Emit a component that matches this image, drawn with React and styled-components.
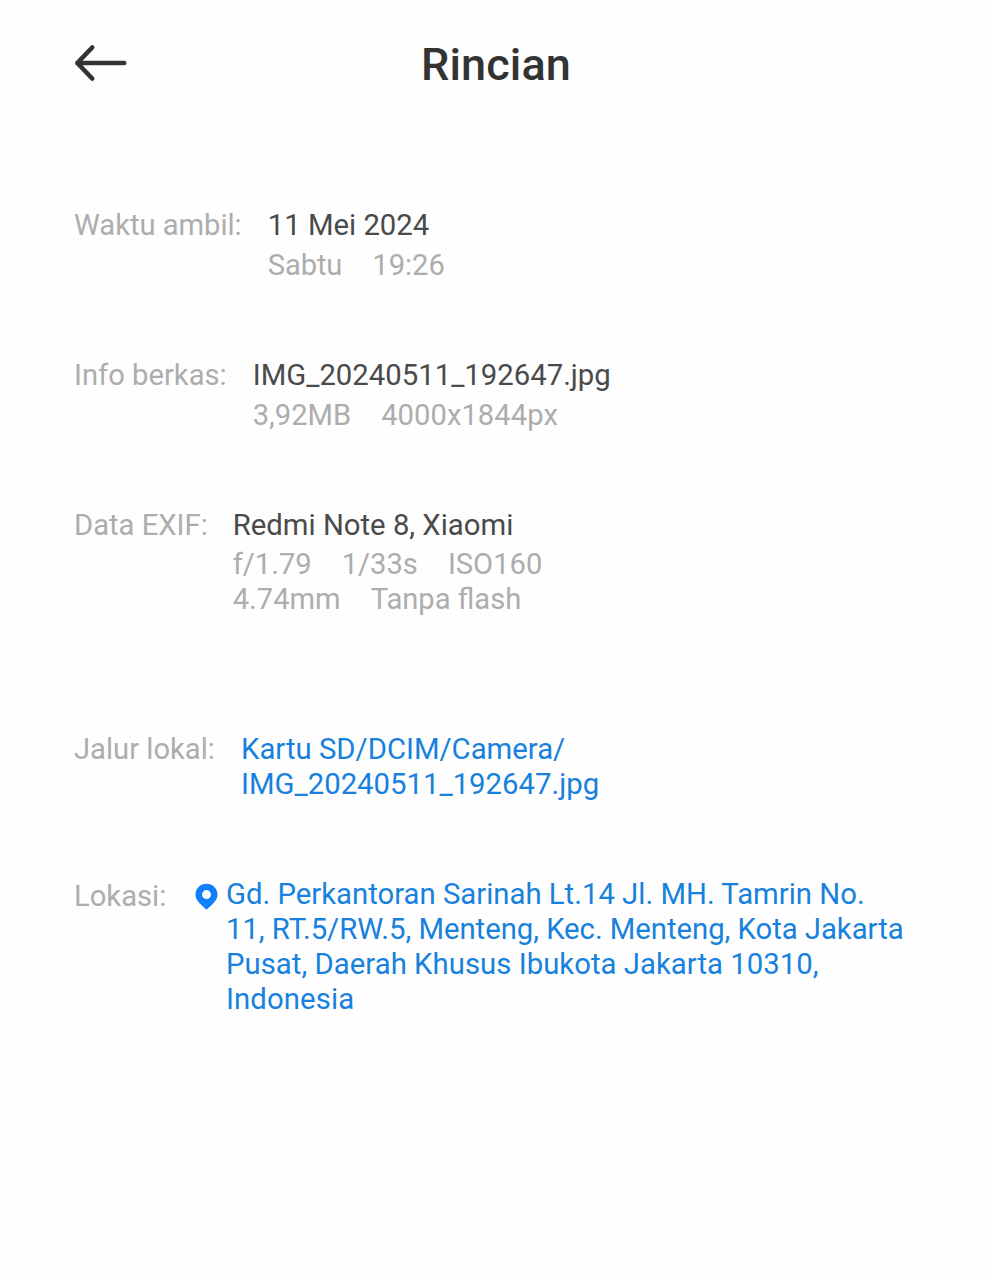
import React from "react";
import styled, { createGlobalStyle } from "styled-components";

const Global = createGlobalStyle`
  * { box-sizing: border-box; }
  body { margin: 0; background: #fefefe; font-family: Roboto, sans-serif; }
`;
const Page = styled.main`
  min-height: 1280px;
  padding: 0 74px;
  background: #fefefe;
`;
const Header = styled.header`
  display: grid;
  grid-template-columns: 54px 1fr 54px;
  align-items: center;
  height: 130px;
`;
const Back = styled.button`
  display: block;
  width: 54px;
  height: 40px;
  padding: 0;
  border: 0;
  margin-bottom: 4px;
  background: none;
  svg { display: block; }
`;
const Title = styled.h1`
  margin: 0;
  text-align: center;
  font-size: 45px;
  line-height: 60px;
  font-weight: 500;
  color: #333;
  letter-spacing: ${(p) => p.$track}px;
`;
const Row = styled.section`
  display: flex;
  align-items: flex-start;
  margin-top: ${(p) => p.$top}px;
`;
const Label = styled.div`
  width: ${(p) => p.$width}px;
  flex: none;
  padding-top: ${(p) => p.$drop || 0}px;
  color: #adadad;
  font-size: 29.2px;
  line-height: 35px;
  white-space: nowrap;
`;
const Value = styled.div`
  color: #4a4a4a;
  font-size: 29.3px;
  line-height: 35px;
  white-space: nowrap;
`;
const Meta = styled.div`
  display: flex;
  gap: 30px;
  margin-top: ${(p) => p.$top || 0}px;
  color: #adadad;
  font-size: 29.15px;
  line-height: 35px;
  white-space: nowrap;
`;
const Link = styled(Value)`
  color: #1781dd;
`;
const Text = styled.span`
  display: block;
  width: max-content;
  letter-spacing: ${(p) => (p.$track ? `${p.$track}px` : "normal")};
`;
const Pin = styled.svg`
  flex: none;
  width: 31px;
  height: 35px;
`;

export default function App() {
  return (
    <Page>
      <Global />
      <Header>
        <Back aria-label="Kembali">
          <svg width="54" height="40" viewBox="0 0 54 40" fill="none" stroke="#333" strokeWidth="4.600" strokeLinecap="round" strokeLinejoin="round">
            <path d="M50.200 20H3.300M18.200 4.500L3.300 20L18.200 35.500" />
          </svg>
        </Back>
        <Title $track={0.15}>Rincian</Title>
      </Header>
      <Row $top={78}>
        <Label $width={193.7}><Text $track={-0.05}>Waktu ambil:</Text></Label>
        <div>
          <Value><Text>11 Mei 2024</Text></Value>
          <Meta $top={5}><Text $track={-0.1}>Sabtu</Text><Text>19:26</Text></Meta>
        </div>
      </Row>
      <Row $top={75}>
        <Label $width={178.7}><Text>Info berkas:</Text></Label>
        <div>
          <Value><Text>IMG_20240511_192647.jpg</Text></Value>
          <Meta $top={5}><Text>3,92MB</Text><Text $track={0.06}>4000x1844px</Text></Meta>
        </div>
      </Row>
      <Row $top={75}>
        <Label $width={158.7}><Text>Data EXIF:</Text></Label>
        <div>
          <Value><Text>Redmi Note 8, Xiaomi</Text></Value>
          <Meta $top={4}><Text>f/1.79</Text><Text>1/33s</Text><Text>ISO160</Text></Meta>
          <Meta><Text>4.74mm</Text><Text>Tanpa flash</Text></Meta>
        </div>
      </Row>
      <Row $top={115}>
        <Label $width={167}><Text>Jalur lokal:</Text></Label>
        <Link>
          <Text>Kartu SD/DCIM/Camera/</Text>
          <Text>IMG_20240511_192647.jpg</Text>
        </Link>
      </Row>
      <Row $top={75}>
        <Label $width={121} $drop={2}><Text>Lokasi:</Text></Label>
        <Pin viewBox="0 0 31 35">
          <path fill="#1180f8" fillRule="evenodd" d="M11.500 6.800C5.300 6.800 0.500 11.600 0.500 17.600C0.500 21.300 2.500 24.200 5.100 26.700L10.300 31.800Q11.500 33 12.700 31.800L17.900 26.700C20.500 24.200 22.500 21.300 22.500 17.600C22.500 11.600 17.700 6.800 11.500 6.800ZM11.500 13.100A4.500 4.500 0 1 1 11.500 22.100A4.500 4.500 0 1 1 11.500 13.100Z" />
        </Pin>
        <Link>
          <Text>Gd. Perkantoran Sarinah Lt.14 Jl. MH. Tamrin No.</Text>
          <Text $track={-0.04}>11, RT.5/RW.5, Menteng, Kec. Menteng, Kota Jakarta</Text>
          <Text $track={0.03}>Pusat, Daerah Khusus Ibukota Jakarta 10310,</Text>
          <Text $track={0.1}>Indonesia</Text>
        </Link>
      </Row>
    </Page>
  );
}
